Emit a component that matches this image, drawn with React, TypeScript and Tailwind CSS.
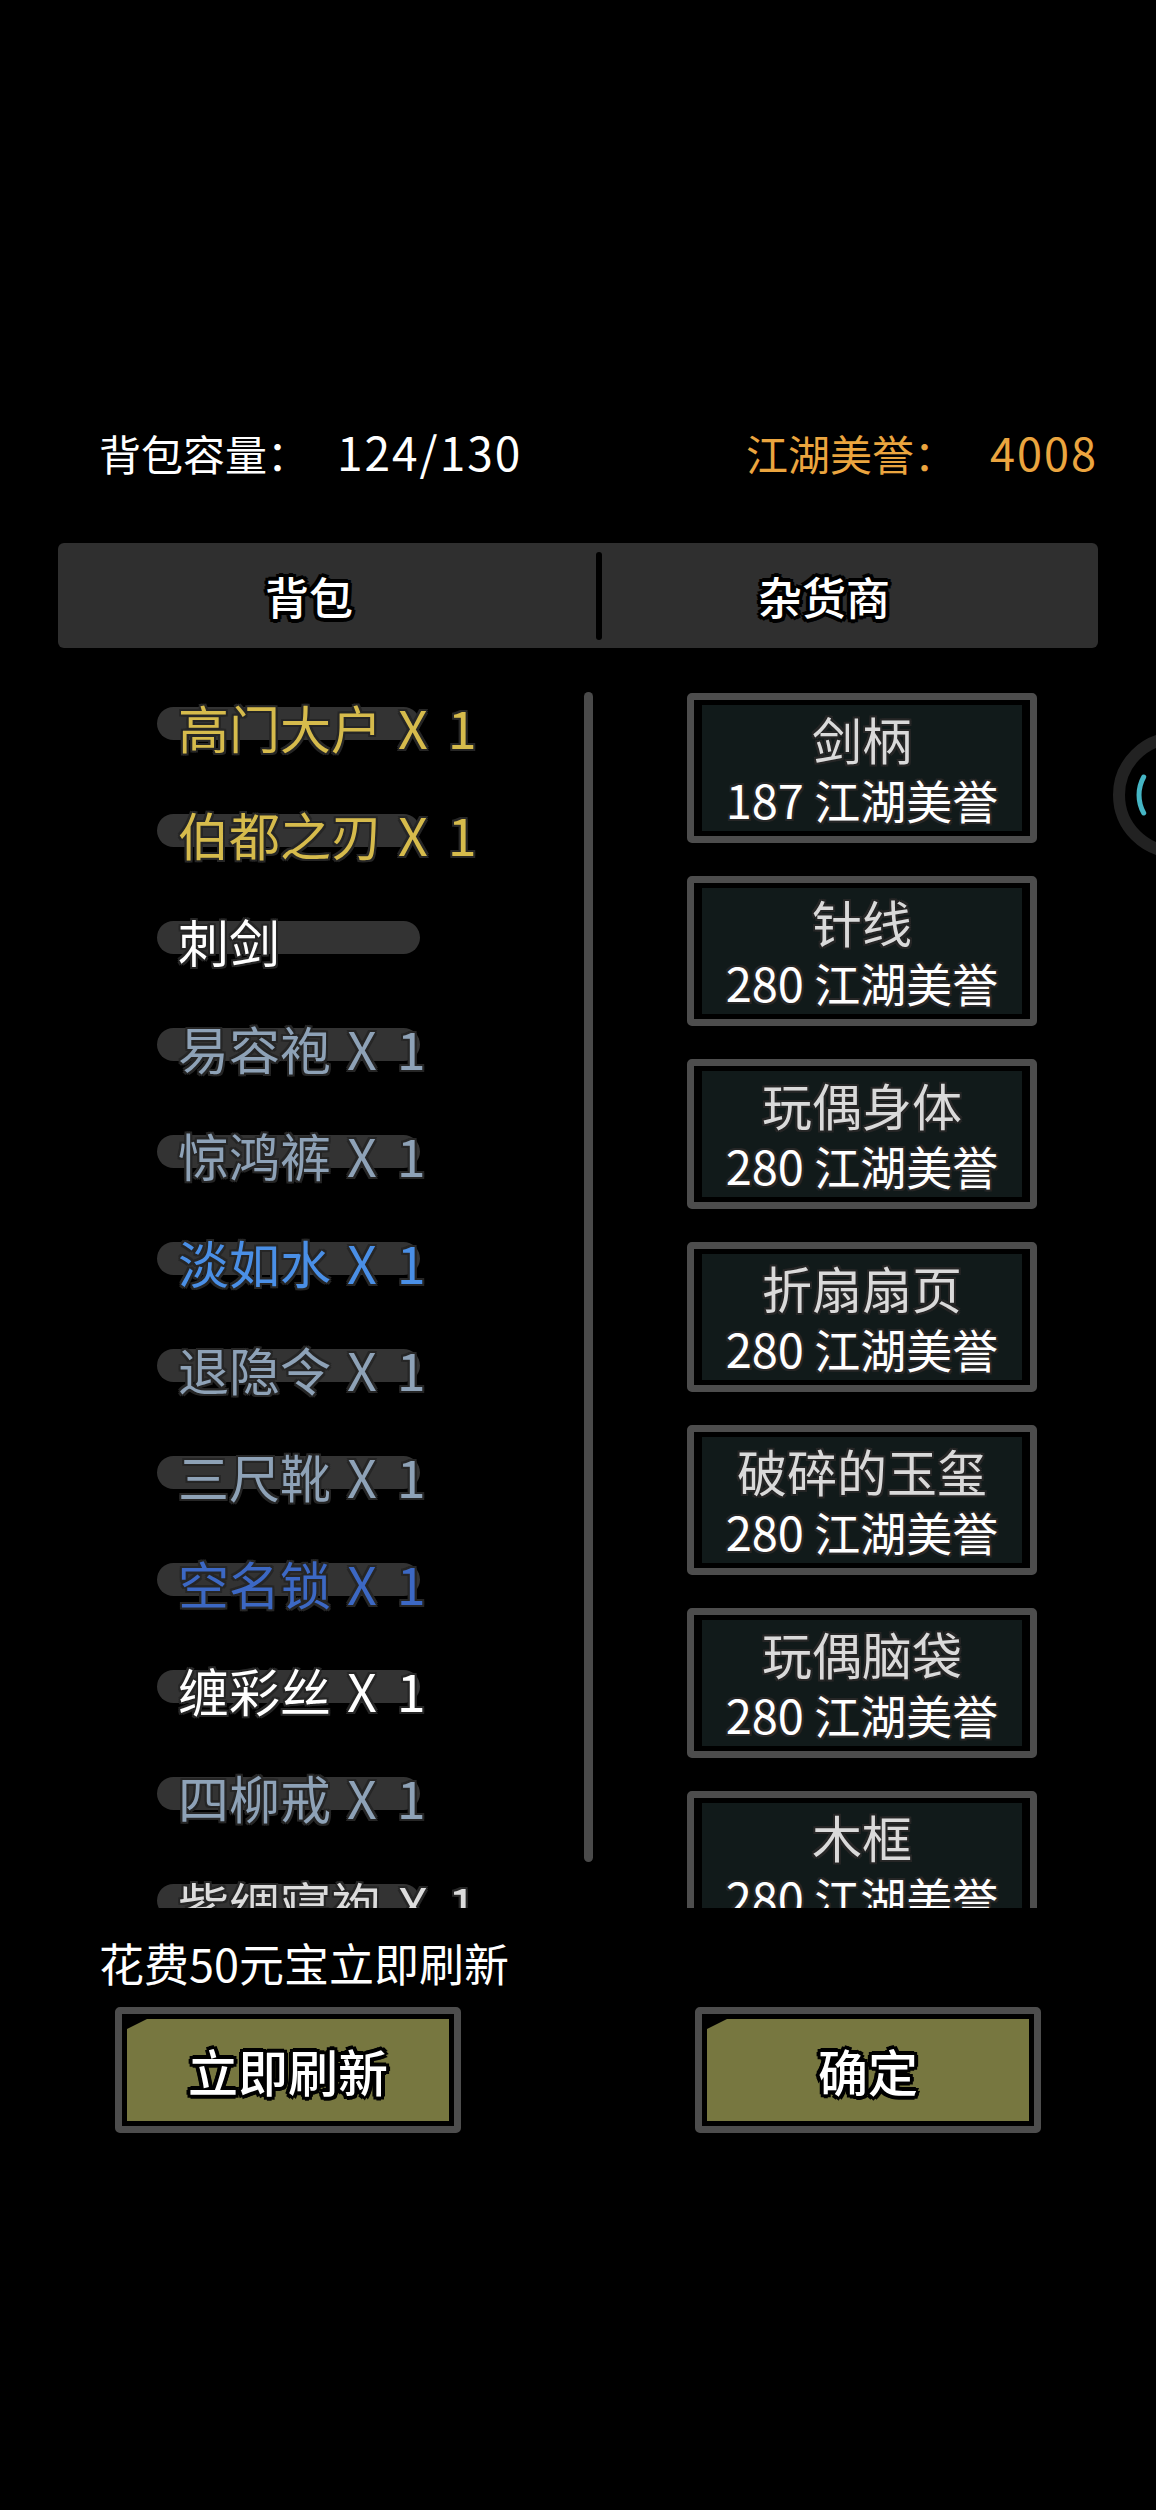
import React from "react";

const OUTLINE_DARK =
  "[text-shadow:2px_0_0_#262626,-2px_0_0_#262626,0_2px_0_#262626,0_-2px_0_#262626,2px_2px_0_#262626,-2px_-2px_0_#262626,2px_-2px_0_#262626,-2px_2px_0_#262626]";
const OUTLINE_BLACK =
  "[text-shadow:4px_0_0_#000,-4px_0_0_#000,0_4px_0_#000,0_-4px_0_#000,3px_3px_0_#000,-3px_-3px_0_#000,3px_-3px_0_#000,-3px_3px_0_#000]";

const BAG_ITEMS: { name: string; count?: number; color: string }[] = [
  { name: "高门大户", count: 1, color: "text-[#d6bb4c]" },
  { name: "伯都之刃", count: 1, color: "text-[#d6bb4c]" },
  { name: "刺剑", color: "text-white" },
  { name: "易容袍", count: 1, color: "text-[#8ea2b7]" },
  { name: "惊鸿裤", count: 1, color: "text-[#8ea2b7]" },
  { name: "淡如水", count: 1, color: "text-[#4a8fe6]" },
  { name: "退隐令", count: 1, color: "text-[#8ea2b7]" },
  { name: "三尺靴", count: 1, color: "text-[#8ea2b7]" },
  { name: "空名锁", count: 1, color: "text-[#3c68c4]" },
  { name: "缠彩丝", count: 1, color: "text-white" },
  { name: "四柳戒", count: 1, color: "text-[#8ea2b7]" },
  { name: "紫绸寝袍", count: 1, color: "text-[#dcdcdc]" },
];

const SHOP_ITEMS: { name: string; price: number }[] = [
  { name: "剑柄", price: 187 },
  { name: "针线", price: 280 },
  { name: "玩偶身体", price: 280 },
  { name: "折扇扇页", price: 280 },
  { name: "破碎的玉玺", price: 280 },
  { name: "玩偶脑袋", price: 280 },
  { name: "木框", price: 280 },
];

function BagRow({ name, count, color }: { name: string; count?: number; color: string }) {
  return (
    <div className="h-[107px] shrink-0 grid grid-cols-[max-content] items-center">
      <div className="[grid-area:1/1] w-[263px] h-[33px] -mt-[6px] rounded-full bg-[#333333]" />
      <div
        className={`[grid-area:1/1] w-max ml-[21px] flex items-baseline text-[51px] leading-[60px] whitespace-nowrap ${color} ${OUTLINE_DARK}`}
      >
        <span>{name}</span>
        {count !== undefined && (
          <>
            <span className="ml-[16px] text-[52px]">X</span>
            <span className="ml-[20px] text-[52px]">{count}</span>
          </>
        )}
      </div>
    </div>
  );
}

function ShopCard({ name, price }: { name: string; price: number }) {
  return (
    <div className="shrink-0 h-[150px] border-[7px] border-[#4d4d4d] rounded-[5px] bg-black px-[8px] py-[5px]">
      <div className="h-full bg-[#111a1a] flex flex-col items-center pt-[1px]">
        <div className={`text-[50px] leading-[64px] text-[#dadada] ${OUTLINE_DARK}`}>{name}</div>
        <div className={`text-[46px] leading-[58px] text-white whitespace-nowrap ${OUTLINE_DARK}`}>
          <span className="text-[47px]">{price}</span> 江湖美誉
        </div>
      </div>
    </div>
  );
}

function OliveButton({ label }: { label: string }) {
  return (
    <div className="w-[346px] h-[126px] border-[7px] border-[#4d4d4d] rounded-[5px] bg-black p-[5px]">
      <div className="h-full bg-[#777740] [clip-path:polygon(0_10px,20px_0,100%_0,100%_100%,0_100%)] flex items-center justify-center">
        <span className={`text-[50px] leading-none font-medium text-white ${OUTLINE_BLACK}`}>{label}</span>
      </div>
    </div>
  );
}

export default function App() {
  return (
    <div className="relative w-[1156px] min-h-[2510px] bg-black overflow-hidden font-['Noto_Sans_CJK_SC','Noto_Sans',sans-serif]">
      <div className="px-[58px] pt-[426px]">
        {/* header */}
        <div className="flex items-center justify-between pl-[41px] h-[52px] text-[42px] leading-[52px]">
          <span className="text-white whitespace-nowrap">
            背包容量：<span className="ml-[28px] text-[46px] tracking-[2px]">124/130</span>
          </span>
          <span className="text-[#eba53f] whitespace-nowrap">
            江湖美誉：<span className="ml-[34px] text-[45px] tracking-[2px]">4008</span>
          </span>
        </div>

        {/* tabs */}
        <div className="mt-[65px] h-[105px] bg-[#2f2f2f] rounded-[6px] flex items-center">
          <div className={`w-[502px] text-center text-[44px] font-medium text-white ${OUTLINE_BLACK}`}>背包</div>
          <div className="w-[36px]" />
          <div className="w-[6px] h-[88px] rounded-full bg-black" />
          <div className={`w-[444px] text-center text-[44px] font-medium text-white ${OUTLINE_BLACK}`}>杂货商</div>
        </div>

        {/* content */}
        <div className="mt-[30px] h-[1230px] flex">
          <div className="w-[526px] h-full overflow-hidden pl-[99px]">
            <div className="-mt-[5px] flex flex-col">
              {BAG_ITEMS.map((it) => (
                <BagRow key={it.name} name={it.name} count={it.count} color={it.color} />
              ))}
            </div>
          </div>
          <div className="w-[9px] mt-[14px] h-[1170px] rounded-full bg-[#4a4a4a]" />
          <div className="ml-[94px] w-[350px] h-full overflow-hidden pt-[15px] flex flex-col gap-[33px]">
            {SHOP_ITEMS.map((it) => (
              <ShopCard key={it.name} name={it.name} price={it.price} />
            ))}
          </div>
        </div>

        {/* footer */}
        <div className="mt-[29px] pl-[41px] text-[45px] leading-[52px] text-white">花费50元宝立即刷新</div>
        <div className="mt-[18px] ml-[57px] flex gap-[234px]">
          <OliveButton label="立即刷新" />
          <OliveButton label="确定" />
        </div>
      </div>

      {/* floating ring at right edge */}
      <svg className="absolute left-[1113px] top-[732px]" width="43" height="126" viewBox="0 0 43 126">
        <circle cx="63" cy="63" r="57" fill="#000" stroke="#222222" strokeWidth="12" />
        <path d="M30.7 45 A37 37 0 0 0 30.7 81" fill="none" stroke="#45b5c4" strokeWidth="5" strokeLinecap="round" />
      </svg>
    </div>
  );
}
